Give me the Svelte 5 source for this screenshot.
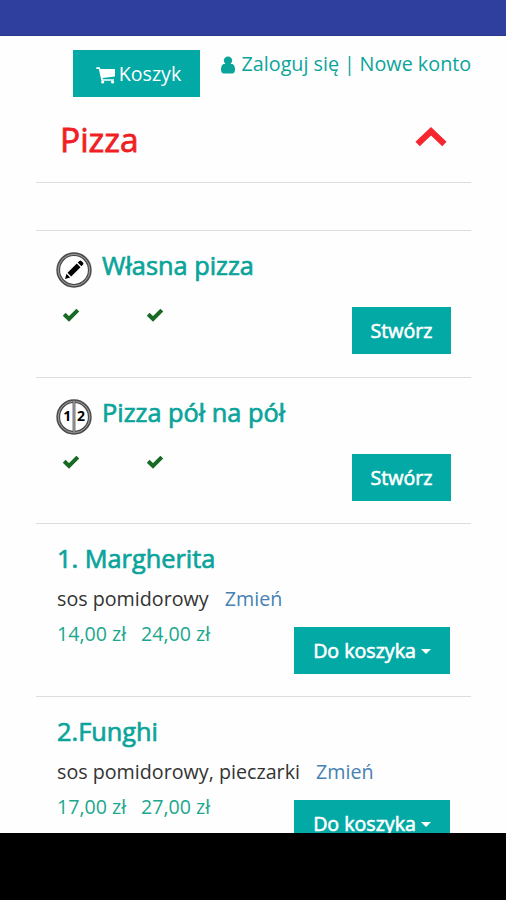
<script>
  const specials = [
    { name: 'Własna pizza', icon: 'pencil' },
    { name: 'Pizza pół na pół', icon: 'halves' }
  ];
  const pizzas = [
    { name: '1. Margherita', toppings: 'sos pomidorowy', prices: ['14,00 zł', '24,00 zł'] },
    { name: '2.Funghi', toppings: 'sos pomidorowy, pieczarki', prices: ['17,00 zł', '27,00 zł'] }
  ];
</script>

{#snippet check()}
  <svg class="check" viewBox="0 0 18 14" width="18" height="14" aria-hidden="true">
    <path d="M2.2 6.3 L7 11 L15.8 2.2" fill="none" stroke="#176a23" stroke-width="4" />
  </svg>
{/snippet}

<div class="screen">
  <div class="status"></div>
  <main>
    <header>
      <button class="btn cart">
        <svg viewBox="0 0 20 18" width="20" height="18" aria-hidden="true">
          <path d="M0.3 1.300h3.600l.5 1.800H19v7.300L6.600 12l.3 1.300h11v1.500H5.400L2.900 2.900H.3z" fill="#fff" />
          <circle cx="6.700" cy="16" r="1.600" fill="#fff" />
          <circle cx="16.600" cy="16" r="1.600" fill="#fff" />
        </svg>
        <span>Koszyk</span>
      </button>
      <nav>
        <svg viewBox="0 0 14 18" width="14" height="18" aria-hidden="true">
          <path d="M3.400 8C1 8 0 10.500 0 13.500 0 16 1 17.500 3 17.500h8c2 0 3-1.500 3-4C14 10.500 13 8 10.600 8z" fill="#0ba49b" />
          <circle cx="7" cy="4.600" r="4.200" fill="#0ba49b" />
        </svg>
        <a class="login" href="#login">Zaloguj się</a><i>|</i><a class="signup" href="#new">Nowe konto</a>
      </nav>
    </header>

    <section class="category">
      <h1>Pizza</h1>
      <svg viewBox="0 0 32 22" width="32" height="22" aria-hidden="true">
        <path d="M2.600 18 L16 5.300 L29.400 18" fill="none" stroke="#f5262f" stroke-width="6.200" />
      </svg>
    </section>
    <div class="gap"></div>

    {#each specials as item}
      <section class="special">
        <div class="title">
          <svg viewBox="0 0 36 36" width="36" height="36" aria-hidden="true">
            <circle cx="18" cy="18" r="15.800" fill="#fff" stroke="#4c4c4c" stroke-width="3.800" />
            <circle cx="18" cy="18" r="15.800" fill="none" stroke="#aaa" stroke-width=".9" />
            {#if item.icon === 'pencil'}
              <path d="M9 27l1.500-5.200 3.700 3.700zM11.500 20.800l9.300-9.300 3.700 3.700-9.300 9.300zM21.700 10.600l1.700-1.700q1-.8 2 .1l1.600 1.600q.9 1 .1 2l-1.700 1.700z" fill="#000" />
            {:else}
              <path d="M18 2v32" stroke="#555" stroke-width="2.800" />
              <path d="M18 2v32" stroke="#ccc" stroke-width=".9" />
              <text x="11.200" y="22.300" class="digit">1</text>
              <text x="25" y="22.300" class="digit">2</text>
            {/if}
          </svg>
          <h2>{item.name}</h2>
        </div>
        <div class="row">
          <div class="checks">{@render check()}{@render check()}</div>
          <button class="btn create">Stwórz</button>
        </div>
      </section>
    {/each}

    {#each pizzas as item}
      <section class="pizza">
        <h2>{item.name}</h2>
        <p><span>{item.toppings}</span><a href="#edit">Zmień</a></p>
        <div class="row">
          <div class="prices">
            {#each item.prices as price}<span>{price}</span>{/each}
          </div>
          <button class="btn add"><span>Do koszyka</span><b></b></button>
        </div>
      </section>
    {/each}
  </main>
  <div class="bottom"></div>
</div>

<style>
  .screen {
    width: 506px;
    height: 900px;
    display: flex;
    flex-direction: column;
    overflow: hidden;
    background: #fefefe;
    font-family: "Open Sans", sans-serif;
    font-size: 19.700px;
    line-height: 28px;
    color: #333;
  }
  .status { height: 36px; flex: none; box-sizing: border-box; background: #2f3f9e; border-bottom: 1px solid #2b388d; }
  .bottom { height: 67px; flex: none; background: #000; }
  main { height: 797px; flex: none; overflow: hidden; padding: 0 35px 0 36px; box-sizing: border-box; }
  a { color: #0ba49b; text-decoration: none; }
  h1, h2, p { margin: 0; font-weight: 400; white-space: nowrap; }
  h2 { font-size: 25.350px; line-height: 33px; color: #0ba49b; -webkit-text-stroke: .7px #0ba49b; }
  .btn {
    display: flex;
    align-items: center;
    justify-content: center;
    box-sizing: border-box;
    flex: none;
    height: 47px;
    padding: 0;
    border: 0;
    border-radius: 0;
    background: #02a9a5;
    color: #fff;
    font: 19.600px/28px "Open Sans", sans-serif;
    white-space: nowrap;
  }
  header { display: flex; height: 75px; padding: 14px 0 0 37px; box-sizing: border-box; }
  .cart { width: 127px; gap: 3px; padding-left: 4px; }
  .cart svg { margin-top: 2px; }
  nav { display: flex; height: 28px; margin-left: 21px; white-space: nowrap; font-size: 19.750px; }
  nav svg { margin: 6px 6.500px 0 0; }
  nav i { font-style: normal; color: #0ba49b; width: 20.500px; text-align: center; }
  .category {
    display: flex;
    justify-content: space-between;
    height: 72px;
    padding: 6px 24px 0 24px;
    box-sizing: border-box;
    border-bottom: 1px solid #ddd;
  }
  h1 { font-size: 33.500px; line-height: 44px; color: #f01f26; -webkit-text-stroke: .8px #f01f26; }
  .category svg { margin-top: 9px; }
  .gap { height: 48px; box-sizing: border-box; border-bottom: 1px solid #ddd; }
  .special { height: 147px; padding: 18px 21px 0 20px; box-sizing: border-box; border-bottom: 1px solid #ddd; }
  .special + .special { height: 146px; }
  .title { display: flex; height: 58px; }
  .title svg { margin: 3px 10px 0 0; }
  .digit { font: 700 14px "Open Sans", sans-serif; text-anchor: middle; fill: #000; }
  .row { display: flex; justify-content: space-between; }
  .checks { display: flex; gap: 66px; padding: 1px 0 0 5.500px; }
  .create { width: 99px; padding-left: 1px; margin-right: -.500px; -webkit-text-stroke: .6px #fff; }
  .pizza { height: 173px; padding: 18px 21px 0 21px; box-sizing: border-box; border-bottom: 1px solid #ddd; }
  .pizza p { display: flex; gap: 16px; margin-top: 10px; height: 28px; }
  .pizza p a { color: #4782b4; }
  .pizza .row { margin-top: 14px; }
  .prices { display: flex; gap: 15px; margin-top: -7px; color: #1aa78e; font-size: 19.600px; }
  .add { width: 156px; gap: 5px; -webkit-text-stroke: .6px #fff; }
  .add b { border: 5.500px solid transparent; border-top-color: #fff; border-bottom: 0; margin-top: 2px; }
</style>
